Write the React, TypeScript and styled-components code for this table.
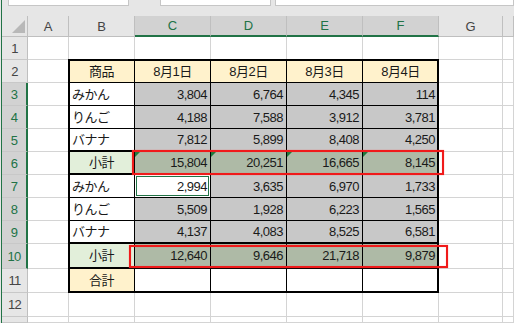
import React from "react";
import styled, { createGlobalStyle } from "styled-components";

const GRID = "#d4d4d4";
const GREEN = "#217346";
const HEAD_BG = "#e6e6e6";
const HEAD_SEL = "#d2d2d2";
const HEAD_LINE = "#bfbfbf";

const GlobalStyle = createGlobalStyle`
  html, body {
    margin: 0;
    padding: 0;
  }
  body {
    width: 514px;
    height: 323px;
    overflow: hidden;
    background: ${HEAD_BG};
    font-family: "Liberation Sans", "Noto Sans CJK JP", sans-serif;
  }
`;

const Window = styled.div`
  display: flex;
  width: 514px;
  height: 323px;
  box-sizing: border-box;
  border-left: 1px solid ${HEAD_BG};
  overflow: hidden;
`;

const Pane = styled.div`
  flex: 1;
  display: flex;
  flex-direction: column;
  border-left: 1px solid ${GREEN};
  min-width: 0;
`;

const TopBar = styled.div`
  height: 16px;
  flex: none;
  display: flex;
  align-items: flex-start;
  background: ${HEAD_BG};
`;

const BarBox = styled.div<{ $gap: number; $width?: number }>`
  height: 5px;
  margin-left: ${(p) => p.$gap}px;
  ${(p) => (p.$width ? `width: ${p.$width}px;` : "flex: 1;")}
  background: #fff;
  border: 1px solid #c6c6c6;
  border-top: none;
`;

const Sheet = styled.div`
  flex: 1;
  display: grid;
  grid-template-columns: 26px 41px 66px repeat(4, 76px) 64px 1fr;
  grid-template-rows: 21px repeat(9, 23px) 25px 24px 24px 1fr;
  background: #fff;
  font-size: 13px;
  line-height: 1;
`;

const Corner = styled.div`
  grid-row: 1;
  grid-column: 1;
  display: flex;
  align-items: flex-end;
  justify-content: flex-end;
  padding: 0 2px 3px 0;
  background: ${HEAD_BG};
  border-right: 1px solid ${HEAD_LINE};
  border-bottom: 1px solid ${HEAD_LINE};
`;

const CornerMark = styled.span`
  width: 0;
  height: 0;
  border-left: 13px solid transparent;
  border-bottom: 13px solid #b8b8b8;
`;

const ColHead = styled.div<{ $col: number; $sel: boolean }>`
  grid-row: 1;
  grid-column: ${(p) => p.$col};
  display: flex;
  align-items: center;
  justify-content: center;
  background: ${(p) => (p.$sel ? HEAD_SEL : HEAD_BG)};
  color: ${(p) => (p.$sel ? GREEN : "#444")};
  border-right: 1px solid ${HEAD_LINE};
  border-bottom: ${(p) => (p.$sel ? `2px solid ${GREEN}` : `1px solid ${HEAD_LINE}`)};
`;

const RowHead = styled.div<{ $row: number; $sel: boolean }>`
  grid-row: ${(p) => p.$row};
  grid-column: 1;
  display: flex;
  align-items: center;
  justify-content: center;
  letter-spacing: -0.8px;
  background: ${(p) => (p.$sel ? HEAD_SEL : HEAD_BG)};
  color: ${(p) => (p.$sel ? GREEN : "#444")};
  border-bottom: 1px solid #c8c8c8;
  border-right: ${(p) => (p.$sel ? `2px solid ${GREEN}` : `1px solid ${HEAD_LINE}`)};
`;

type Kind =
  | "plain"
  | "head"
  | "item"
  | "sub"
  | "total"
  | "num"
  | "numSub"
  | "active"
  | "blank";

const fills: Record<Kind, string> = {
  plain: "#fff",
  head: "#fff2cc",
  item: "#fff",
  sub: "#e2efda",
  total: "#fff2cc",
  num: "#c8c8c8",
  numSub: "#aebaa6",
  active: "#fff",
  blank: "#fff",
};

const aligns: Record<Kind, string> = {
  plain: "flex-start",
  head: "center",
  item: "flex-start",
  sub: "center",
  total: "center",
  num: "flex-end",
  numSub: "flex-end",
  active: "flex-end",
  blank: "flex-end",
};

const Cell = styled.div<{ $row: number; $col: number; $kind: Kind; $thick: boolean }>`
  grid-row: ${(p) => p.$row};
  grid-column: ${(p) => p.$col};
  position: relative;
  display: flex;
  align-items: center;
  justify-content: ${(p) => aligns[p.$kind]};
  padding: 0 3px;
  overflow: hidden;
  white-space: nowrap;
  letter-spacing: -0.5px;
  color: #1a1a1a;
  background: ${(p) => fills[p.$kind]};
  border-right: 1px solid ${(p) => (p.$kind === "plain" ? GRID : "#000")};
  border-bottom: ${(p) => (p.$thick ? 2 : 1)}px solid
    ${(p) => (p.$kind === "plain" ? GRID : "#000")};
  box-shadow: ${(p) =>
    p.$kind === "active" ? `inset 0 0 0 1px #fff, inset 0 0 0 2px ${GREEN}` : "none"};
`;

const ErrorMark = styled.span`
  position: absolute;
  top: 0;
  left: 0;
  width: 0;
  height: 0;
  border-top: 5px solid #1e7b3c;
  border-right: 5px solid transparent;
`;

// thick outline around B2:F11
const TableFrame = styled.div`
  grid-row: 3 / 13;
  grid-column: 3 / 8;
  margin: -1px 0 0 -1px;
  border: 2px solid #000;
  pointer-events: none;
  z-index: 1;
`;

const Callout = styled.div<{ $row: number; $margin: string }>`
  grid-row: ${(p) => p.$row};
  grid-column: 4 / 8;
  margin: ${(p) => p.$margin};
  border: 2px solid #f01a1a;
  box-shadow: 0 0 1px rgba(255, 60, 60, 0.6), inset 0 0 1px rgba(255, 60, 60, 0.6);
  pointer-events: none;
  z-index: 2;
`;

// H only peeks in at the right edge, so its letter is out of view
const letters = ["A", "B", "C", "D", "E", "F", "G", ""];

type Line = { label: string; kind: "head" | "item" | "sub" | "total"; values: string[] };

const table: Line[] = [
  { label: "商品", kind: "head", values: ["8月1日", "8月2日", "8月3日", "8月4日"] },
  { label: "みかん", kind: "item", values: ["3,804", "6,764", "4,345", "114"] },
  { label: "りんご", kind: "item", values: ["4,188", "7,588", "3,912", "3,781"] },
  { label: "バナナ", kind: "item", values: ["7,812", "5,899", "8,408", "4,250"] },
  { label: "小計", kind: "sub", values: ["15,804", "20,251", "16,665", "8,145"] },
  { label: "みかん", kind: "item", values: ["2,994", "3,635", "6,970", "1,733"] },
  { label: "りんご", kind: "item", values: ["5,509", "1,928", "6,223", "1,565"] },
  { label: "バナナ", kind: "item", values: ["4,137", "4,083", "8,525", "6,581"] },
  { label: "小計", kind: "sub", values: ["12,640", "9,646", "21,718", "9,879"] },
  { label: "合計", kind: "total", values: ["", "", "", ""] },
];

const ROWS = 13;
const VISIBLE_LABELS = 12;
const thickRows = [5, 6, 9, 10];

const App: React.FC = () => {
  const cells: React.ReactNode[] = [];

  for (let r = 1; r <= ROWS; r++) {
    const gridRow = r + 1;
    const line = r >= 2 && r <= 11 ? table[r - 2] : null;
    const thick = thickRows.includes(r);

    for (let c = 2; c <= 9; c++) {
      let kind: Kind = "plain";
      let text = "";
      let mark = false;

      if (line && c >= 3 && c <= 7) {
        if (c === 3) {
          kind = line.kind;
          text = line.label;
        } else {
          text = line.values[c - 4];
          if (line.kind === "head") kind = "head";
          else if (line.kind === "total") kind = "blank";
          else if (r === 7 && c === 4) kind = "active";
          else kind = line.kind === "sub" ? "numSub" : "num";
          mark = r === 6;
        }
      }

      cells.push(
        <Cell
          key={`${r}-${c}`}
          $row={gridRow}
          $col={c}
          $kind={kind}
          $thick={thick && kind !== "plain"}
        >
          {mark && <ErrorMark />}
          {text}
        </Cell>
      );
    }
  }

  return (
    <Window>
      <GlobalStyle />
      <Pane>
        <TopBar>
          <BarBox $gap={6} $width={119} />
          <BarBox $gap={31} $width={109} />
          <BarBox $gap={4} />
        </TopBar>
        <Sheet>
          <Corner>
            <CornerMark />
          </Corner>
          {letters.map((l, i) => (
            <ColHead key={i} $col={i + 2} $sel={i >= 2 && i <= 5}>
              {l}
            </ColHead>
          ))}
          {Array.from({ length: ROWS }, (_, i) => (
            <RowHead key={i} $row={i + 2} $sel={i + 1 >= 3 && i + 1 <= 10}>
              {i < VISIBLE_LABELS ? i + 1 : ""}
            </RowHead>
          ))}
          {cells}
          <TableFrame />
          <Callout $row={7} $margin="-2px -5px 0 -3px" />
          <Callout $row={11} $margin="1px -9px 1px -6px" />
        </Sheet>
      </Pane>
    </Window>
  );
};

export default App;
